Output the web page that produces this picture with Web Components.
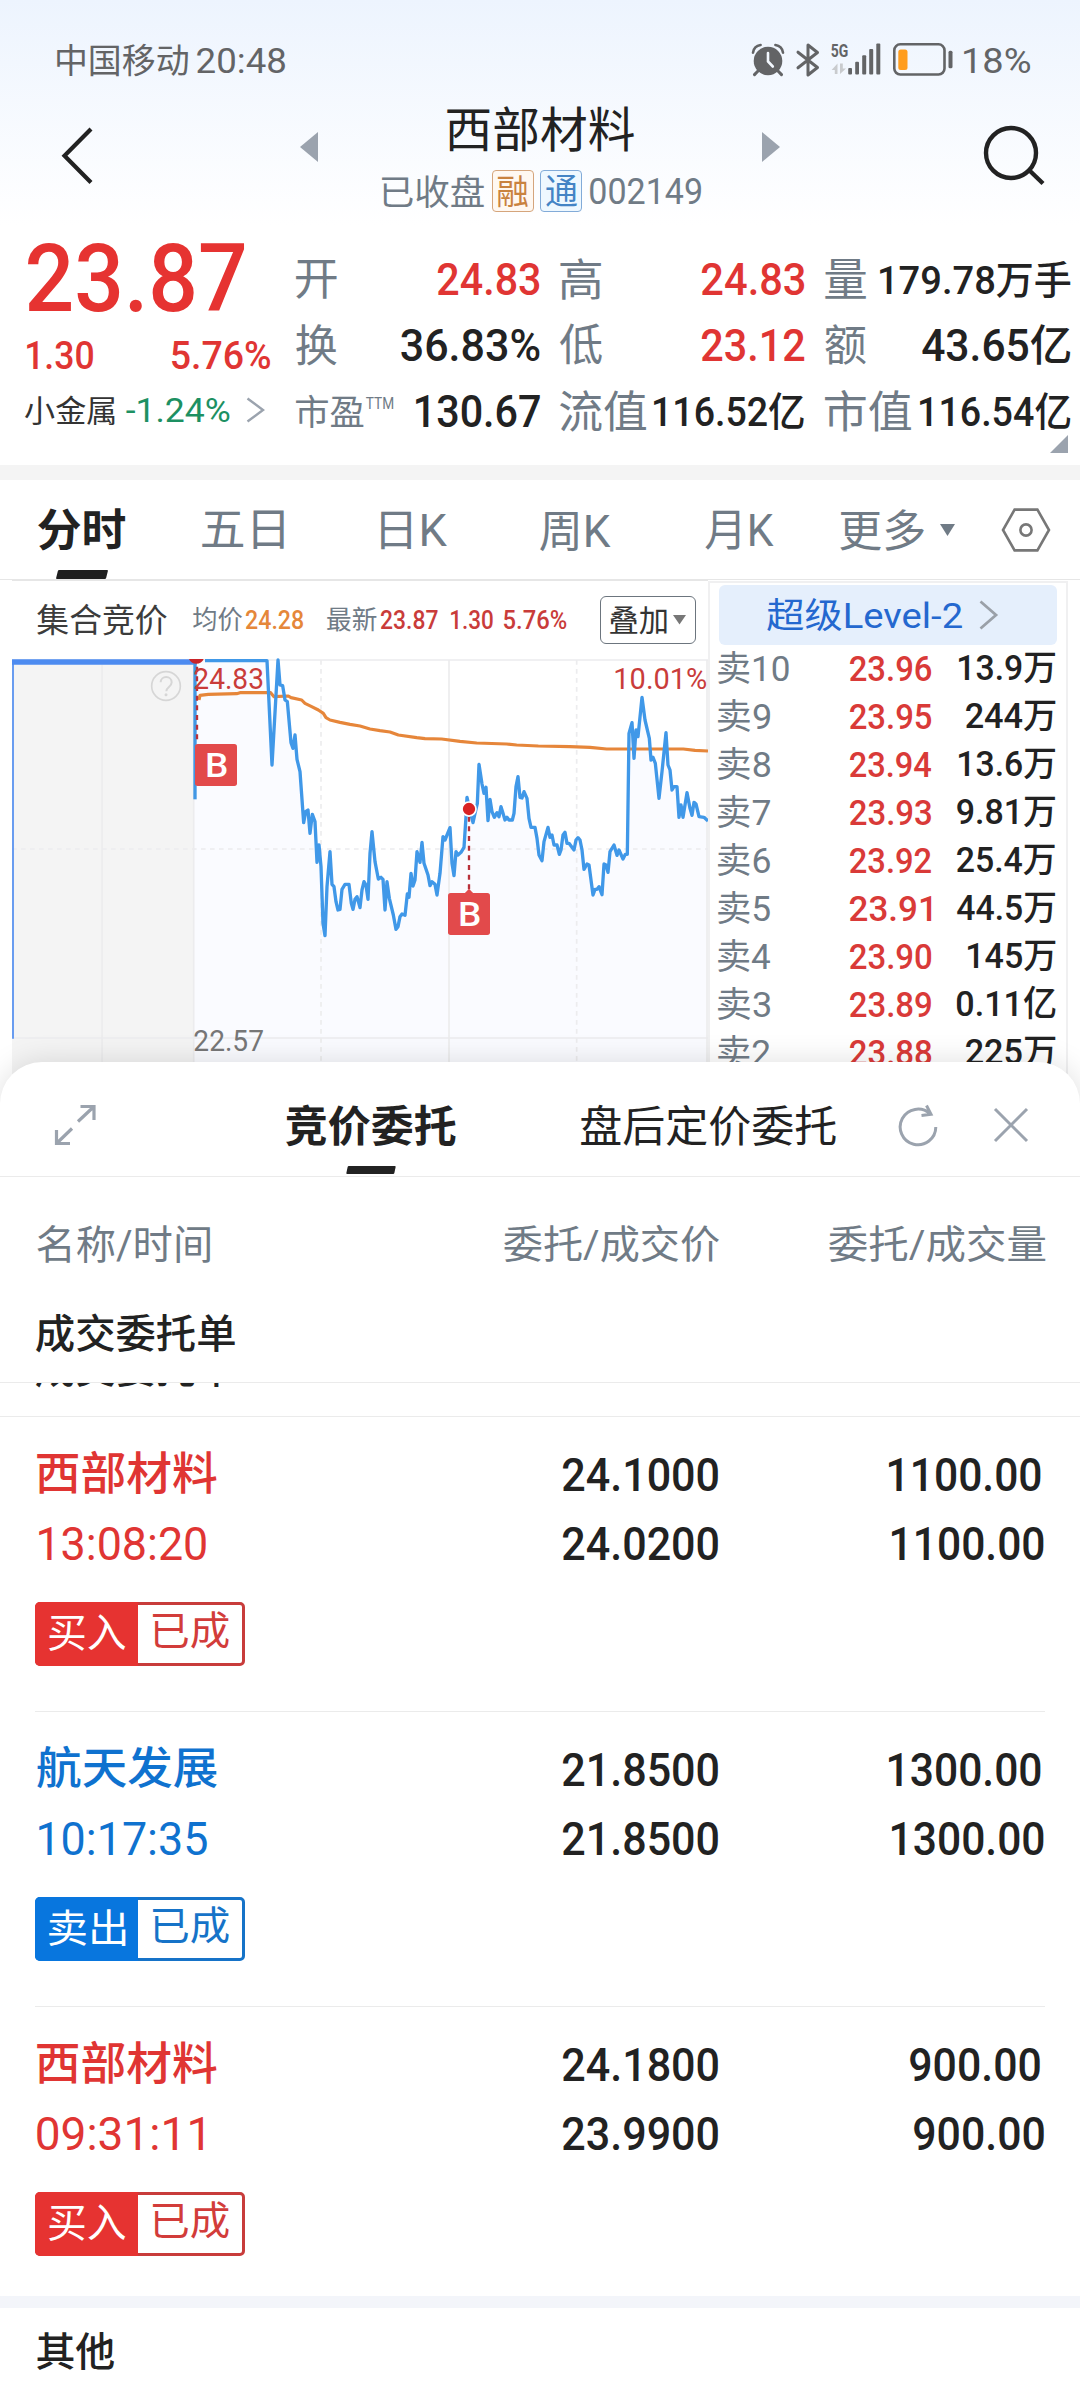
<!DOCTYPE html>
<html lang="zh-CN">
<head>
<meta charset="utf-8">
<title>西部材料 002149</title>
<style>
  html, body { margin: 0; padding: 0; }
  body {
    width: 1080px; height: 2388px; overflow: hidden; background: #fff; color: #222;
    font-family: Roboto, "Noto Sans CJK SC", sans-serif;
    --red: #e03533; --blue: #0f72cf; --muted: #707b86; --icon: #9ba3ae; --line: #ebebeb;
  }
</style>
</head>
<body>
<stock-app></stock-app>
<script>
/* Text whose glyphs fill a box of w x h pixels; the box takes part in normal flow. */
const measure = document.createElement('canvas').getContext('2d');
customElements.define('fit-text', class extends HTMLElement {
  connectedCallback() {
    if (this.shadowRoot) return;
    const w = +this.getAttribute('w'), h = +this.getAttribute('h');
    const ml = this.getAttribute('ml') || 0, mt = this.getAttribute('mt') || 0;
    const weight = this.getAttribute('b') || 400;
    const family = getComputedStyle(this).fontFamily;
    measure.font = `${weight} 100px ${family}`;
    const m = measure.measureText(this.textContent);
    const size = h / (m.actualBoundingBoxAscent + m.actualBoundingBoxDescent) * 100;
    const k = size / 100;
    const sx = w / ((m.actualBoundingBoxLeft + m.actualBoundingBoxRight) * k);
    const A = Math.round(m.fontBoundingBoxAscent * k), D = Math.round(m.fontBoundingBoxDescent * k);
    const ty = m.actualBoundingBoxAscent * k - (Math.floor((h - A - D) / 2) + A);
    const tx = m.actualBoundingBoxLeft * k * sx;
    this.attachShadow({ mode: 'open' }).innerHTML = `<style>
      :host { display: block; flex: none; width: ${w}px; height: ${h}px; margin-left: ${ml}px; margin-top: ${mt}px; font-weight: ${weight}; }
      span { display: block; width: max-content; white-space: nowrap; font-size: ${size}px; line-height: ${h}px;
        transform-origin: 0 0; transform: translate(${tx}px, ${ty}px) scaleX(${sx}); }
    </style><span><slot></slot></span>`;
  }
});

function define(name, render) {
  customElements.define(name, class extends HTMLElement {
    connectedCallback() {
      if (this.shadowRoot) return;
      this.attachShadow({ mode: 'open' }).innerHTML = render(this);
    }
  });
}

define('status-bar', () => `<style>
    :host { display: flex; align-items: center; height: 77px; padding: 21px 0 0 57px; color: #636466; }
    svg { display: block; flex: none; overflow: visible; }
  </style>
  <fit-text w="131" h="32">中国移动</fit-text>
  <fit-text w="88" h="26" ml="9">20:48</fit-text>
  <svg style="margin-left:467px" width="32" height="32" viewBox="0 0 32 32" fill="#636466">
    <circle cx="16" cy="17" r="14.3"/>
    <path d="M1 8.6C1.600 4.500 4.500 1.600 8.600 1" fill="none" stroke="#636466" stroke-width="2.600" stroke-linecap="round"/>
    <path d="M31 8.600C30.400 4.500 27.500 1.600 23.400 1" fill="none" stroke="#636466" stroke-width="2.600" stroke-linecap="round"/>
    <path d="M6 27l-3.500 3.600M26 27l3.500 3.600" stroke="#636466" stroke-width="3" stroke-linecap="round"/>
    <path d="M16 9v8.500l4.800 5" fill="none" stroke="#f3f8ff" stroke-width="2.600" stroke-linecap="round"/>
  </svg>
  <svg style="margin-left:12px" width="24" height="34" viewBox="0 0 24 34" fill="none" stroke="#636466" stroke-width="3" stroke-linejoin="round" stroke-linecap="round">
    <path d="M2 9.200L21.500 24.500 12 32V2l9.500 7.500L2 24.800"/>
  </svg>
  <svg style="margin-left:11px" width="50" height="33" viewBox="0 0 50 33" fill="#636466">
    <text x="-.3" y="14.300" font-size="18" font-weight="700" textLength="17.500" lengthAdjust="spacingAndGlyphs">5G</text>
    <path fill="#c9cbce" d="M6.500 31V20.500L.6 27h3.200v4zM9 20.500V31l6-5.500h-3.200v-5z"/>
    <rect x="17.200" y="25" width="3.800" height="6.500" rx="1"/><rect x="24.200" y="18.700" width="3.800" height="12.800" rx="1"/>
    <rect x="31.200" y="12.300" width="4" height="19.200" rx="1"/><rect x="38.200" y="6" width="4" height="25.500" rx="1"/>
    <rect x="45.300" y=".6" width="4" height="30.900" rx="1"/>
  </svg>
  <svg style="margin-left:12px" width="60" height="33" viewBox="0 0 60 33">
    <rect x="1.300" y="1.300" width="50.200" height="30.200" rx="6" fill="none" stroke="#636466" stroke-width="2.600"/>
    <rect x="5.300" y="6.500" width="9.200" height="20.500" rx="2.500" fill="#ff9d1e"/>
    <rect x="55.500" y="7.800" width="4" height="17.400" rx="1.500" fill="#636466"/>
  </svg>
  <fit-text w="66" h="26" ml="11">18%</fit-text>`);

define('stock-header', () => `<style>
    :host { display: flex; align-items: flex-start; height: 132px; color: #222; }
    svg { display: block; flex: none; }
    .mid { width: 324px; flex: none; }
    .sub { display: flex; align-items: center; height: 42px; width: 330px; margin-top: 19px; margin-left: 64px; color: var(--muted); }
    .chip { display: flex; flex: none; align-items: center; justify-content: center; box-sizing: border-box; width: 42px; height: 42px; border: 1.500px solid; border-radius: 4px; }
    .r { margin-left: 8px; color: #c9823f; border-color: #d5a57c; background: #fff8f1; }
    .t { margin-left: 6px; color: #4484c5; border-color: #82abd8; background: #eef8ff; }
  </style>
  <svg style="margin:28px 0 0 58px" width="40" height="60" viewBox="0 0 40 60"><path d="M33 3L6.500 29.800 33 56.600" fill="none" stroke="#222" stroke-width="4.200"/></svg>
  <svg style="margin:34px 0 0 202px" width="18" height="30" viewBox="0 0 18 30"><path d="M18 0v30L0 15z" fill="#9ba3ae"/></svg>
  <div class="mid">
    <fit-text w="187" h="44.500" ml="128.700" mt="8.500">西部材料</fit-text>
    <div class="sub">
      <fit-text w="102" h="33">已收盘</fit-text>
      <div class="chip r"><fit-text w="30" h="32">融</fit-text></div>
      <div class="chip t"><fit-text w="31" h="32">通</fit-text></div>
      <fit-text w="111" h="27" ml="8" mt="-2">002149</fit-text>
    </div>
  </div>
  <svg style="margin:34px 0 0 120px" width="18" height="30" viewBox="0 0 18 30"><path d="M0 0v30L18 15z" fill="#9ba3ae"/></svg>
  <svg style="margin:26px 0 0 202px" width="64" height="64" viewBox="0 0 64 64" fill="none" stroke="#222" stroke-width="4.400"><circle cx="29" cy="29" r="25"/><path d="M47.500 46.500L61 59.500"/></svg>`);

define('quote-cell', el => `<style>
    :host { display: flex; align-items: center; justify-content: space-between; }
    .l { display: flex; color: var(--muted); }
    .v { color: ${el.hasAttribute('up') ? 'var(--red)' : '#222'}; }
  </style><div class="l"><slot name="l"></slot></div><div class="v"><slot></slot></div>`);

define('quote-board', () => {
  const c = (l, lw, lh, v, w, h, up = '') =>
    `<quote-cell ${up}><fit-text slot="l" w="${lw}" h="${lh}">${l}</fit-text><fit-text b="500" w="${w}" h="${h}">${v}</fit-text></quote-cell>`;
  return `<style>
    :host { display: flex; flex-direction: column; height: 235px; }
    .main { display: flex; height: 214px; }
    .price { width: 270.500px; color: var(--red); }
    .row { display: flex; align-items: center; }
    .grid { display: grid; margin: 16px 0 0 25px; grid-template-columns: 244px 244px 246px; grid-template-rows: repeat(3, 66px); column-gap: 20.500px; }
    svg { display: block; flex: none; }
    .more { align-self: flex-end; margin: -9px 12px 0 0; }
  </style>
  <div class="main">
    <div class="price">
      <fit-text b="500" w="216.500" h="69.600" ml="27.500" mt="11.700" style="color:#e63331">23.87</fit-text>
      <div class="row" style="margin-top:29.700px"><fit-text b="500" w="66" h="28.700" ml="27">1.30</fit-text><fit-text b="500" w="98.300" h="28.700" ml="79">5.76%</fit-text></div>
      <div class="row" style="margin-top:26.300px"><fit-text w="89.500" h="28.700" ml="24.800" style="color:#333">小金属</fit-text><fit-text w="103.400" h="24.600" ml="12" style="color:#1d9062">-1.24%</fit-text>
        <svg style="margin-left:16px" width="20" height="26" viewBox="0 0 20 26"><path d="M1.500 1.500L17 13 1.500 24.500" fill="none" stroke="#9ba3ae" stroke-width="2.400"/></svg></div>
    </div>
    <div class="grid">
      ${c('开', 40.5, 38.6, '24.83', 101.5, 32.5, 'up')}${c('高', 41, 41.5, '24.83', 102.5, 32.5, 'up')}${c('量', 41, 39.3, '179.78万手', 190.5, 36.6)}
      ${c('换', 40.5, 41.6, '36.83%', 138.5, 33.3)}${c('低', 42, 41.6, '23.12', 102.5, 32.5, 'up')}${c('额', 41, 41.3, '43.65亿', 148.3, 41)}
      <quote-cell><fit-text slot="l" w="67.500" h="33.700">市盈</fit-text><fit-text slot="l" w="27" h="11.300" ml="3" mt="4">TTM</fit-text><fit-text b="500" w="124" h="32.700">130.67</fit-text></quote-cell>
      ${c('流值', 86, 42, '116.52亿', 149.8, 37.7)}${c('市值', 86, 42, '116.54亿', 150.2, 37.7)}
    </div>
  </div>
  <svg class="more" width="18" height="18" viewBox="0 0 18 18"><path d="M18 0v18H0z" fill="#9ba3ae"/></svg>`;
});

define('chart-tabs', () => `<style>
    :host { display: flex; align-items: center; height: 99px; margin-top: 15px; border-bottom: 1px solid #e6e6e6; color: var(--muted); position: relative; }
    :host::before { content: ""; position: absolute; left: 0; right: 0; top: -15px; height: 15px; background: #f4f4f4; }
    .on { position: relative; color: #222; margin-left: 38px; }
    .on::after { content: ""; position: absolute; left: 19px; top: 61px; width: 50px; height: 9px; background: #1f1f1f; transform: skewX(-14deg); border-radius: 1px; }
    svg { display: block; flex: none; }
  </style>
  <div class="on"><fit-text b="700" w="87.400" h="41.700">分时</fit-text></div>
  <fit-text w="82" h="39" ml="77" mt="2">五日</fit-text>
  <fit-text w="66" h="38.500" ml="96.500" mt="2">日K</fit-text>
  <fit-text w="70.600" h="39.500" ml="93" mt="2">周K</fit-text>
  <fit-text w="68.500" h="39.500" ml="95" mt="2">月K</fit-text>
  <fit-text w="84" h="41.700" ml="66">更多</fit-text>
  <svg style="margin-left:16px" width="15" height="12" viewBox="0 0 15 12"><path d="M0 0h15L7.500 12z" fill="#707b86"/></svg>
  <svg style="margin-left:46px" width="50" height="44" viewBox="0 0 50 44" fill="none" stroke="#777" stroke-width="2.600"><path d="M13.600 1.600h22.800L48 22 36.400 42.400H13.600L2 22z"/><circle cx="25" cy="22" r="5.600"/></svg>`);

/* Chart coordinates: three units to a pixel. */
const early = '615,62 801,62 816,375 834,60 840,135 848,137 855,180 862,185 873,308 879,325 885,285 891,358 900,395 911,548 917,515 924,510 930,580 937,523 945,545 951,667 957,615 963,680 969,850 975,887 981,740 990,635 996,733 1002,740 1008,785 1014,810 1020,808 1026,748 1035,733 1047,733 1054,790 1059,808 1065,778 1071,770 1080,803 1086,750 1092,725 1098,735 1104,778 1110,640 1116,575 1125,665 1135,717 1143,712';
const late = '9,718 15,810 21,725 28,775 40,825 48,868 54,860 60,830 66,822 75,826 82,762 87,772 93,700 99,738 105,720 111,635 120,667 126,607 132,670 144,705 150,737 156,725 165,733 171,765 180,700 189,590 195,600 210,563 216,670 222,707 228,635 234,645 243,637 252,622 258,530 261,472 267,500 279,548 285,520 292,490 297,373 306,432 312,460 318,442 324,542 330,478 336,515 343,532 351,518 357,530 363,500 369,520 375,540 381,532 387,540 397,540 402,520 408,440 414,410 420,472 426,474 432,455 441,475 447,535 453,562 465,562 471,595 477,645 486,662 492,605 504,562 510,592 516,585 522,615 531,615 538,643 543,630 549,585 555,577 561,610 567,610 582,630 588,600 594,593 600,600 606,630 612,688 621,672 627,675 633,720 639,765 645,748 651,748 657,740 666,764 672,672 678,675 684,697 690,635 702,615 711,646 717,630 729,657 736,643 742,643 747,280 756,248 762,355 768,270 774,290 786,172 795,240 808,295 813,360 819,352 826,370 837,475 846,395 858,278 864,375 870,390 876,450 882,440 891,440 897,532 903,495 909,532 921,458 930,505 936,526 942,487 948,492 957,530 972,532 984,543';
const avgEarly = '597,180 600,166 625,163 710,161 720,158 812,158 822,170 865,168 873,173 905,180 915,190 935,200 955,210 970,220 978,233 990,240 1020,247 1050,253 1080,258 1110,267';
const avgLate = '0,272 30,276 55,285 110,293 135,296 185,297 240,304 290,309 380,312 410,315 475,318 570,320 630,322 680,327 910,327 945,331 984,333';
const afternoon = s => s.split(' ').map(p => { const [x, y] = p.split(','); return (+x + 1140) + ',' + y; }).join(' ');
const priceLine = early + ' ' + afternoon(late);
const avgLine = avgEarly + ' ' + afternoon(avgLate);

define('minute-chart', () => `<style>
    :host { display: block; width: 708px; flex: none; }
    .head { display: flex; align-items: center; height: 78px; color: var(--muted); }
    .head .up { color: #c93c3a; }
    .btn { display: flex; align-items: center; box-sizing: border-box; width: 96px; height: 48px; margin: 2px 0 0 34px; border: 1.300px solid #6c757e; border-radius: 6px; color: #333; }
    svg { display: block; flex: none; }
    .rule { height: 1px; margin: 0 0 -1px 12px; background: #e6e6e6; }
  </style>
  <div class="rule"></div>
  <div class="head">
    <fit-text w="129.700" h="30.700" ml="37" style="color:#3c3c3c">集合竞价</fit-text>
    <fit-text w="49" h="24.500" ml="26">均价</fit-text><fit-text b="500" w="57" h="18.500" ml="4.300" mt="2" style="color:#e5873a">24.28</fit-text>
    <fit-text w="49.300" h="24.500" ml="24.500">最新</fit-text>
    <fit-text b="500" class="up" w="56.500" h="18.500" ml="4.200" mt="2">23.87</fit-text><fit-text b="500" class="up" w="41.700" h="18.500" ml="13.400" mt="2">1.30</fit-text><fit-text b="500" class="up" w="62.400" h="18.500" ml="11.300" mt="2">5.76%</fit-text>
    <div class="btn"><fit-text w="56.700" h="27.400" ml="9">叠加</fit-text><svg style="margin-left:6px" width="13" height="10" viewBox="0 0 13 10"><path d="M0 0h13L6.500 9.500z" fill="#777"/></svg></div>
  </div>
  <svg width="710" height="446" viewBox="0 54 2130 1338" fill="none">
    <rect x="36" y="60" width="1708" height="1332" fill="#fff"/>
    <rect x="36" y="60" width="545" height="1332" fill="#f4f4f4"/>
    <path d="M582 62L${priceLine.replace(/ /g, 'L')}L2124 1392H582z" fill="#fafbff"/>
    <g stroke="#ececee" stroke-width="5">
      <path d="M36 60H2124M36 1194H2124M306 60V1392M581 60V1392M1347 60V1392M2121 60V1392"/>
      <path d="M36 627H2124M963 60V1392M1730 60V1392" stroke-dasharray="14 13"/>
    </g>
    <path d="M39 60V1196" stroke="#4d8bf0" stroke-width="5"/>
    <path d="M36 66H590" stroke="#4d8bf0" stroke-width="17"/>
    <path d="M585 66V478" stroke="#4197e4" stroke-width="10"/>
    <polyline points="${avgLine}" stroke="#e6863a" stroke-width="9.500" stroke-linejoin="round"/>
    <polyline points="${priceLine}" stroke="#4098e8" stroke-width="10" stroke-linejoin="round"/>
    <path d="M591 80V312M1407 530V752" stroke="#b8303a" stroke-width="7" stroke-dasharray="15 14"/>
    <path d="M567 57a24 24 0 0 0 44 0z" fill="#c9242a"/>
    <circle cx="1407" cy="507" r="21" fill="#d92324" stroke="#fff" stroke-width="5"/>
    <circle cx="498" cy="138" r="43" stroke="#d6d6d6" stroke-width="5"/>
    <path d="M482 127c0-21 33-21 33 0 0 14-16 14-16 27" stroke="#d6d6d6" stroke-width="6"/><circle cx="498" cy="164" r="4.500" fill="#d6d6d6"/>
    <g font-size="90">
      <text x="580" y="148" fill="#c93c3a" textLength="212" lengthAdjust="spacingAndGlyphs">24.83</text>
      <text x="580" y="1233" fill="#777" textLength="212" lengthAdjust="spacingAndGlyphs">22.57</text>
      <text x="1840" y="148" fill="#c93c3a" textLength="282" lengthAdjust="spacingAndGlyphs">10.01%</text>
    </g>
    <rect x="585" y="312" width="126" height="126" rx="8" fill="#e24a4b"/>
    <path d="M1392 762l15-16 15 16z" fill="#e24a4b"/>
    <rect x="1344" y="759" width="126" height="126" rx="8" fill="#e24a4b"/>
    <g font-size="102" font-weight="500" fill="#fff">
      <text x="615" y="411" textLength="70" lengthAdjust="spacingAndGlyphs">B</text>
      <text x="1374" y="858" textLength="70" lengthAdjust="spacingAndGlyphs">B</text>
    </g>
  </svg>`);

define('order-book', () => {
  const rows = [['10', 70.7, '23.96', '13.9万', 96], ['9', 52, '23.95', '244万', 89.3], ['8', 52, '23.94', '13.6万', 96], ['7', 52, '23.93', '9.81万', 98], ['6', 52, '23.92', '25.4万', 97.7], ['5', 52, '23.91', '44.5万', 98], ['4', 52, '23.90', '145万', 87.3], ['3', 52, '23.89', '0.11亿', 98.3], ['2', 52, '23.88', '225万', 89.3]];
  return `<style>
    :host { display: block; box-sizing: border-box; width: 360px; height: 523px; overflow: hidden; margin-top: 1px; border: 2px solid #f0f0f1; border-bottom: 0; }
    .lv { display: flex; align-items: center; height: 60px; margin: 2px 9px 0; background: #e5effc; border-radius: 6px; color: #2468cf; }
    .row { display: grid; grid-template-columns: 131.700px 81px 1fr; align-items: center; height: 48.030px; margin: 0 11px 0 8px; }
    .row > :last-child { justify-self: end; }
    .list { margin-top: -1.800px; }
  </style>
  <div class="lv"><fit-text w="195" h="33" ml="48">超级Level-2</fit-text><svg style="margin-left:17px" width="20" height="30" viewBox="0 0 20 30"><path d="M1.500 1.500L17 15 1.500 28.500" fill="none" stroke="#9aa0a8" stroke-width="2.800"/></svg></div>
  <div class="list">${rows.map(r => `<div class="row"><fit-text w="${r[1]}" h="33" style="color:var(--muted)">卖${r[0]}</fit-text><fit-text b="500" w="81.300" h="25.700" mt="4" style="color:#d93a38">${r[2]}</fit-text><fit-text b="500" w="${r[4]}" h="${r[3].endsWith('亿') ? 33 : 30.7}">${r[3]}</fit-text></div>`).join('')}</div>`;
});

define('sheet-tabs', () => `<style>
    :host { display: flex; align-items: center; height: 114px; border-bottom: 1px solid var(--line); color: #222; }
    .on { position: relative; margin-left: 189px; }
    .on::after { content: ""; position: absolute; left: 61px; top: 61px; width: 48px; height: 8px; background: #222; border-radius: 1px; transform: skewX(-12deg); }
    .on { margin-top: 12px; }
    svg { display: block; flex: none; margin-top: 12px; }
  </style>
  <svg style="margin-left:54px" width="43" height="42" viewBox="0 0 43 42" fill="none" stroke="#9ba3ae" stroke-width="3.200"><path d="M26.500 2.500H40V16M40 2.500L24 17.500M2.500 26v13.500H16M2.500 39.500L18 24.500"/></svg>
  <div class="on"><fit-text b="700" w="169.500" h="41">竞价委托</fit-text></div>
  <fit-text w="254.700" h="41" ml="125.300" mt="12">盘后定价委托</fit-text>
  <svg style="margin-left:62px" width="42" height="44" viewBox="0 0 42 44" fill="none" stroke="#9ba3ae" stroke-width="3"><path d="M38.800 24A17.800 17.800 0 1 1 33 10.800M29.500 2.500L34 11.300 24.500 12.500"/></svg>
  <svg style="margin-left:53px" width="38" height="38" viewBox="0 0 38 38" fill="none" stroke="#9ba3ae" stroke-width="3"><path d="M3 3l32 32M35 3L3 35"/></svg>`);

define('side-tag', el => {
  const sell = el.getAttribute('side') === 'sell';
  return `<style>
    :host { display: flex; box-sizing: border-box; width: 210px; height: 64px; border: 3px solid ${sell ? '#1673c8' : '#c83c3b'}; border-radius: 5px; background: #fff; color: ${sell ? '#1673c8' : '#d23c3a'}; }
    .k { display: flex; align-items: center; width: 103px; flex: none; margin: -3px 0 -3px -3px; padding-left: 14px; box-sizing: border-box; background: ${sell ? '#0876de' : '#e63331'}; color: #fff; border-radius: 5px 0 0 5px; }
    .s { display: flex; align-items: center; padding-left: 15px; }
  </style><div class="k"><fit-text w="76.500" h="36.500" mt="-3">${sell ? '卖出' : '买入'}</fit-text></div><div class="s"><fit-text w="75.800" h="37.300" mt="-4">已成</fit-text></div>`;
});

define('entrust-row', el => {
  const a = n => el.getAttribute(n);
  return `<style>
    :host { display: block; height: 294px; margin: 0 35px; border-bottom: 1px solid ${a('last') !== null ? 'transparent' : 'var(--line)'}; color: #222; }
    .r { display: grid; grid-template-columns: 683.400px 1fr; align-items: center; }
    .r > div { display: flex; justify-content: space-between; align-items: center; }
    .name { color: ${a('side') === 'sell' ? 'var(--blue)' : 'var(--red)'}; }
    .q { justify-content: flex-end !important; }
  </style>
  <div class="r" style="padding-top:33.700px"><div><fit-text class="name" b="500" w="180" h="42.700" ml="2">${a('name')}</fit-text><fit-text b="500" w="155" h="34" mt="3">${a('price')}</fit-text></div><div class="q" style="padding-right:5px"><fit-text b="500" w="${a('qw')}" h="34" mt="3">${a('qty')}</fit-text></div></div>
  <div class="r" style="padding-top:32.500px"><div><fit-text class="name" w="${a('tw')}" h="34.300" ml="${a('tl')}">${a('time')}</fit-text><fit-text b="500" w="155" h="34.300">${a('deal')}</fit-text></div><div class="q" style="padding-right:1.500px"><fit-text b="500" w="${a('qw')}" h="34.300">${a('qty')}</fit-text></div></div>
  <side-tag side="${a('side')}" style="margin-top:41px"></side-tag>`;
});

define('entrust-sheet', () => `<style>
    :host { display: block; position: relative; margin-top: -42px; height: 1326px; background: #fff; border-radius: 42px 42px 0 0; box-shadow: 0 0 30px rgba(0,0,0,.13); color: #222; }
    .cols { display: flex; align-items: center; height: 38px; padding: 47.500px 0 0 36.500px; color: var(--muted); }
    .clip { height: 33.300px; overflow: hidden; border-bottom: 1px solid var(--line); border-top: 1px solid var(--line); margin-top: 29.500px; }
    .band { height: 12px; background: #f3f5fa; margin-top: -6.700px; }
  </style>
  <sheet-tabs></sheet-tabs>
  <div class="cols"><fit-text w="173" h="37.600">名称/时间</fit-text><fit-text w="215" h="37.600" ml="294">委托/成交价</fit-text><fit-text w="216.400" h="37.600" ml="110.200">委托/成交量</fit-text></div>
  <fit-text b="500" w="199" h="37.700" ml="36" mt="52.500">成交委托单</fit-text>
  <div class="clip"><fit-text b="500" w="199" h="37.700" ml="36" mt="-33.500">成交委托单</fit-text></div>
  <entrust-row side="buy" name="西部材料" time="13:08:20" tw="167" tl="4" price="24.1000" deal="24.0200" qty="1100.00" qw="151.500"></entrust-row>
  <entrust-row side="sell" name="航天发展" time="10:17:35" tw="168" tl="4" price="21.8500" deal="21.8500" qty="1300.00" qw="151.500"></entrust-row>
  <entrust-row last side="buy" name="西部材料" time="09:31:11" tw="166" tl="1.500" price="24.1800" deal="23.9900" qty="900.00" qw="129.800"></entrust-row>
  <div class="band"></div>
  <fit-text b="500" w="77" h="37.300" ml="36.500" mt="24">其他</fit-text>`);

define('stock-app', () => `<style>
    :host { display: block; width: 1080px; height: 2388px; overflow: hidden; }
    .top { background: linear-gradient(#edf4fe, #fff 225px); }
    .trend { display: flex; height: 524px; overflow: hidden; }
  </style>
  <div class="top"><status-bar></status-bar><stock-header></stock-header><quote-board></quote-board></div>
  <chart-tabs></chart-tabs>
  <div class="trend"><minute-chart></minute-chart><order-book></order-book></div>
  <entrust-sheet></entrust-sheet>`);
</script>
</body>
</html>
